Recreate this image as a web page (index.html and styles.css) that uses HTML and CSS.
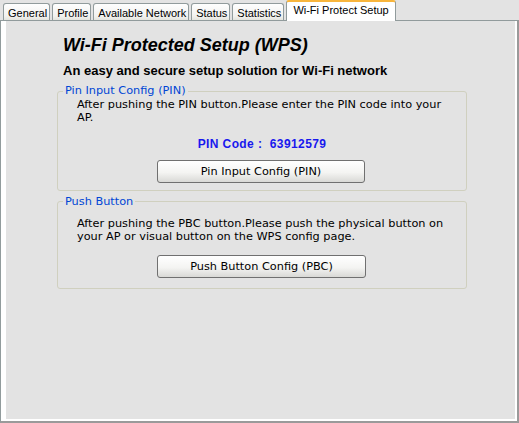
FILE: index.html
```html
<!DOCTYPE html>
<html lang="en">
<head>
    <meta charset="UTF-8">
    <title>Wi-Fi Protect Setup</title>
    <link rel="stylesheet" href="styles.css">
</head>
<body>
    <div class="tabs">
        <div class="tab">General</div>
        <div class="tab">Profile</div>
        <div class="tab">Available Network</div>
        <div class="tab">Status</div>
        <div class="tab">Statistics</div>
        <div class="tab active">Wi-Fi Protect Setup</div>
    </div>

    <div class="panel">
        <div class="content">
            <h1 class="title">Wi-Fi Protected Setup (WPS)</h1>
            <h2 class="subtitle">An easy and secure setup solution for Wi-Fi network</h2>

            <fieldset class="group">
                <legend>Pin Input Config (PIN)</legend>
                <p class="note">After pushing the PIN button.Please enter the PIN code into your AP.</p>
                <div class="pin-code">PIN Code :&nbsp; 63912579</div>
                <button class="action">Pin Input Config (PIN)</button>
            </fieldset>

            <fieldset class="group group-pbc">
                <legend>Push Button</legend>
                <p class="note">After pushing the PBC button.Please push the physical button on your AP or visual button on the WPS config page.</p>
                <button class="action">Push Button Config (PBC)</button>
            </fieldset>
        </div>
    </div>
</body>
</html>
```

FILE: styles.css
```css
html, body {
    height: 100%;
}
body {
    margin: 0;
    display: flex;
    flex-direction: column;
    background: #e3e3e3;
    font-family: 'DejaVu Sans', Verdana, sans-serif;
    font-size: 11.3px;
    color: #000;
}

/* tab strip */
.tabs {
    display: flex;
    align-items: flex-end;
    gap: 2px;
    height: 20px;
    padding-left: 3px;
}
.tab {
    height: 17px;
    box-sizing: border-box;
    padding: 2px 2px 0 4px;
    line-height: 14px;
    font-family: 'Liberation Sans', Arial, sans-serif;
    font-size: 11px;
    border: 1px solid #919b9c;
    border-bottom: none;
    border-radius: 3px 3px 0 0;
    background: linear-gradient(#fefefe, #f2f2f0 75%, #e4e4de);
    white-space: nowrap;
}
.tab.active {
    position: relative;
    z-index: 1;
    height: 21px;
    margin-bottom: -1px;
    padding: 1px 6px 0;
    background: #fff;
    border-top: 2px solid #f8b53c;
}

/* tab page */
.panel {
    flex: 1;
    display: flex;
    border: 1px solid #919b9c;
    border-right: 2px solid #9a9a9a;
    border-bottom: 2px solid #9a9a9a;
    background: #fff;
    padding: 0 2px 2px 5px;
}
.content {
    flex: 1;
    background: #e3e3e3;
    padding: 13px 0 0 51px;
}
.title {
    margin: 0 0 0 6px;
    font-family: 'Liberation Sans', Arial, sans-serif;
    font-size: 18px;
    font-style: italic;
    font-weight: bold;
    line-height: 22px;
}
.subtitle {
    margin: 7px 0 0 6px;
    font-family: 'Liberation Sans', Arial, sans-serif;
    font-size: 13px;
    font-weight: bold;
    line-height: 15px;
}

/* group boxes */
.group {
    width: 410px;
    box-sizing: border-box;
    margin: 6px 0 0;
    padding: 0 0 7px 19px;
    border: 1px solid #d0d0bf;
    border-radius: 3px;
    min-inline-size: 0;
}
.group legend {
    margin-left: -14px;
    padding: 0 2px;
    line-height: 14px;
    color: #0046d5;
}
.group-pbc {
    margin-top: 4px;
    padding-bottom: 10px;
}
.note {
    margin: 0;
    width: 375px;
    line-height: 13.4px;
}
.group-pbc .note {
    margin-top: 8px;
}
.pin-code {
    margin: 12px 0 0 -19px;
    text-align: center;
    font-family: 'Liberation Sans', Arial, sans-serif;
    font-size: 12px;
    font-weight: bold;
    line-height: 15px;
    letter-spacing: 0.4px;
    color: #1818ee;
}
.action {
    display: block;
    width: 208px;
    height: 23px;
    margin: 8px 0 0 80px;
    padding: 0;
    font-family: inherit;
    font-size: 11.3px;
    color: #000;
    border: 1px solid #707070;
    border-radius: 3px;
    background: linear-gradient(#ffffff, #f4f4f2 55%, #d9d9d6);
}
.group-pbc .action {
    width: 209px;
    margin-top: 11px;
}
```
